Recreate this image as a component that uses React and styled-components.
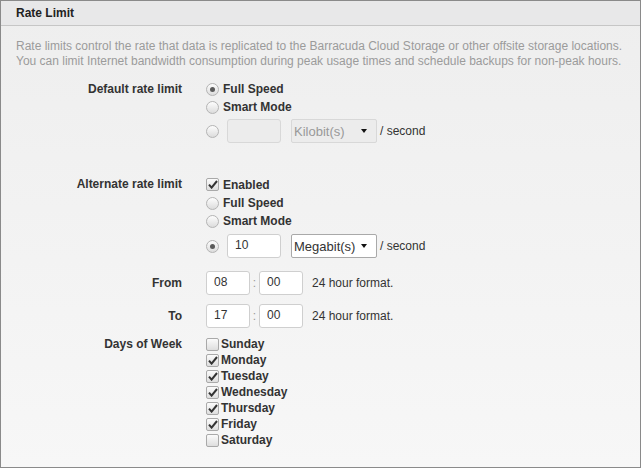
import React from 'react'
import styled, { createGlobalStyle } from 'styled-components'

const GlobalStyle = createGlobalStyle`
  html, body {
    margin: 0;
    padding: 0;
  }
  body {
    font-family: "Liberation Sans", Arial, sans-serif;
    font-size: 12px;
    color: #333;
  }
`

const Panel = styled.div`
  box-sizing: border-box;
  width: 641px;
  height: 468px;
  border: 1px solid #8a8a8a;
  display: flex;
  flex-direction: column;
  background: linear-gradient(#eeeeee, #f7f7f7);
`

const PanelHeader = styled.div`
  height: 24px;
  flex: none;
  display: flex;
  align-items: center;
  padding: 0 15px;
  background: #e8e8e9;
  border-bottom: 1px solid #c6c6c6;
  font-weight: bold;
  font-size: 12px;
  color: #222;
`

const PanelBody = styled.div`
  padding: 13px 15px;
`

const Description = styled.p`
  margin: 0;
  line-height: 15px;
  color: #9b9b9b;
`

const Field = styled.div`
  display: grid;
  grid-template-columns: 166px 1fr;
  column-gap: 24px;
  margin-top: ${p => p.$top}px;
`

const Label = styled.div`
  text-align: right;
  font-weight: bold;
  color: #333;
  line-height: ${p => p.$lh || 18}px;
  align-self: ${p => (p.$center ? 'center' : 'start')};
`

const Stack = styled.div`
  display: flex;
  flex-direction: column;
`

const Option = styled.label`
  display: flex;
  align-items: center;
  height: ${p => p.$h || 18}px;
  gap: ${p => (p.$tight ? 2 : 4)}px;
  font-weight: bold;
  color: #333;
`

const RadioDot = styled.span`
  box-sizing: border-box;
  width: 13px;
  height: 13px;
  flex: none;
  border-radius: 50%;
  border: 1px solid #b4b4b4;
  background: linear-gradient(#fdfdfd, #dcdcdc);
  display: flex;
  align-items: center;
  justify-content: center;
  &::after {
    content: '';
    display: ${p => (p.$checked ? 'block' : 'none')};
    width: 5px;
    height: 5px;
    border-radius: 50%;
    background: #5a5a5a;
  }
`

const CheckBox = styled.span`
  box-sizing: border-box;
  width: 13px;
  height: 13px;
  flex: none;
  border-radius: 2px;
  border: 1px solid #a9a9a9;
  background: linear-gradient(#fbfbfb, #dedede);
  display: flex;
  align-items: center;
  justify-content: center;
`

const InputRow = styled.div`
  display: flex;
  align-items: center;
  margin-top: ${p => p.$top ?? 0}px;
  gap: ${p => p.$gap ?? 8}px;
`

const TextBox = styled.input`
  box-sizing: border-box;
  width: ${p => p.$w}px;
  height: 24px;
  margin: 0;
  padding: 0 0 2px 7px;
  border: 1px solid ${p => (p.disabled ? '#d8d8d8' : '#cfcfcf')};
  border-radius: 3px;
  background: ${p => (p.disabled ? '#ececec' : '#fff')};
  font-family: inherit;
  font-size: 12px;
  color: #333;
  outline: none;
`

const SelectWrap = styled.div`
  position: relative;
  margin-left: 2px;
`

const Select = styled.select`
  box-sizing: border-box;
  width: 86px;
  height: 24px;
  margin: 0;
  padding: 0 0 0 2px;
  appearance: none;
  border: 1px solid ${p => (p.disabled ? '#d8d8d8' : '#a9a9a9')};
  border-radius: 2px;
  background: ${p => (p.disabled ? '#ececec' : '#fff')};
  font-family: inherit;
  font-size: 13px;
  color: ${p => (p.disabled ? '#999' : '#333')};
  opacity: 1;
`

const Arrow = styled.span`
  position: absolute;
  right: 10px;
  top: 10px;
  width: 0;
  height: 0;
  border-left: 3.5px solid transparent;
  border-right: 3.5px solid transparent;
  border-top: 4px solid #111;
  pointer-events: none;
`

const Hint = styled.span`
  color: #333;
  margin-left: ${p => p.$left ?? 0}px;
`

const Colon = styled.span`
  width: 9px;
  text-align: center;
  color: #999;
`

const Check = () => (
  <svg width="10" height="9" viewBox="0 0 10 9">
    <path d="M1 4.6 L3.6 7.6 L9 1" fill="none" stroke="#333" strokeWidth="2" />
  </svg>
)

const days = [
  ['Sunday', false],
  ['Monday', true],
  ['Tuesday', true],
  ['Wednesday', true],
  ['Thursday', true],
  ['Friday', true],
  ['Saturday', false],
]

const Radio = ({ checked, children }) => (
  <Option>
    <RadioDot $checked={checked} />
    {children}
  </Option>
)

const TimeField = ({ label, hour, top }) => (
  <Field $top={top}>
    <Label $center>{label}</Label>
    <InputRow $gap={0}>
      <TextBox $w={44} defaultValue={hour} />
      <Colon>:</Colon>
      <TextBox $w={44} defaultValue="00" />
      <Hint $left={9}>24 hour format.</Hint>
    </InputRow>
  </Field>
)

export default function App() {
  return (
    <>
      <GlobalStyle />
      <Panel>
        <PanelHeader>Rate Limit</PanelHeader>
        <PanelBody>
          <Description>
            Rate limits control the rate that data is replicated to the Barracuda Cloud Storage or other offsite storage locations.
            <br />
            You can limit Internet bandwidth consumption during peak usage times and schedule backups for non-peak hours.
          </Description>

          <Field $top={11}>
            <Label>Default rate limit</Label>
            <Stack>
              <Radio checked>Full Speed</Radio>
              <Radio>Smart Mode</Radio>
              <InputRow $top={3}>
                <RadioDot />
                <TextBox $w={54} disabled />
                <SelectWrap>
                  <Select disabled defaultValue="kb">
                    <option value="kb">Kilobit(s)</option>
                  </Select>
                  <Arrow />
                </SelectWrap>
                <Hint $left={-5}>/ second</Hint>
              </InputRow>
            </Stack>
          </Field>

          <Field $top={32}>
            <Label>Alternate rate limit</Label>
            <Stack>
              <Option $h={19}>
                <CheckBox>
                  <Check />
                </CheckBox>
                Enabled
              </Option>
              <Radio>Full Speed</Radio>
              <Radio>Smart Mode</Radio>
              <InputRow $top={4}>
                <RadioDot $checked />
                <TextBox $w={54} defaultValue="10" />
                <SelectWrap>
                  <Select defaultValue="mb">
                    <option value="kb">Kilobit(s)</option>
                    <option value="mb">Megabit(s)</option>
                  </Select>
                  <Arrow />
                </SelectWrap>
                <Hint $left={-5}>/ second</Hint>
              </InputRow>
            </Stack>
          </Field>

          <TimeField label="From" hour="08" top={13} />
          <TimeField label="To" hour="17" top={9} />

          <Field $top={8}>
            <Label $lh={16}>Days of Week</Label>
            <Stack>
              {days.map(([day, on]) => (
                <Option key={day} $h={16} $tight>
                  <CheckBox>{on && <Check />}</CheckBox>
                  {day}
                </Option>
              ))}
            </Stack>
          </Field>
        </PanelBody>
      </Panel>
    </>
  )
}
